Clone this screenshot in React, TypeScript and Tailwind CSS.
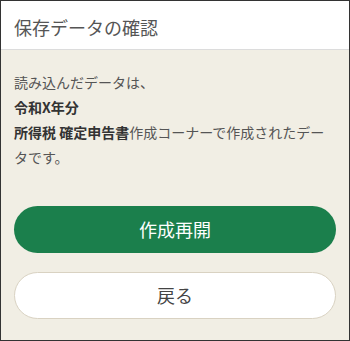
export default function App() {
  return (
    <div
      className="flex h-[341px] w-[350px] flex-col border border-[#333] bg-[#f1eee4]"
      style={{ fontFamily: '"Noto Sans CJK JP", "Noto Sans", sans-serif' }}
    >
      {/* ヘッダー */}
      <div className="flex h-[49px] shrink-0 items-center border-b border-[#dcdcdc] bg-white px-[13px] pt-[4px]">
        <h1 className="text-[18px] font-normal text-[#555]">保存データの確認</h1>
      </div>

      {/* 本文 */}
      <div className="flex flex-1 flex-col px-[13px] pt-[20px]">
        <div className="text-[14px] leading-[25px] text-[#555]">
          <p>読み込んだデータは、</p>
          <p className="font-bold text-[#333]">令和X年分</p>
          <p>
            <span className="font-bold text-[#333]">所得税 確定申告書</span>
            作成コーナーで作成されたデータです。
          </p>
        </div>

        <div className="mt-[36px] flex flex-col gap-[19px]">
          <button className="h-[47px] w-full rounded-full bg-[#1b7f4c] text-[18px] text-white">
            作成再開
          </button>
          <button className="h-[47px] w-full rounded-full border border-[#d9d2c2] bg-white text-[18px] text-[#444]">
            戻る
          </button>
        </div>
      </div>
    </div>
  );
}
